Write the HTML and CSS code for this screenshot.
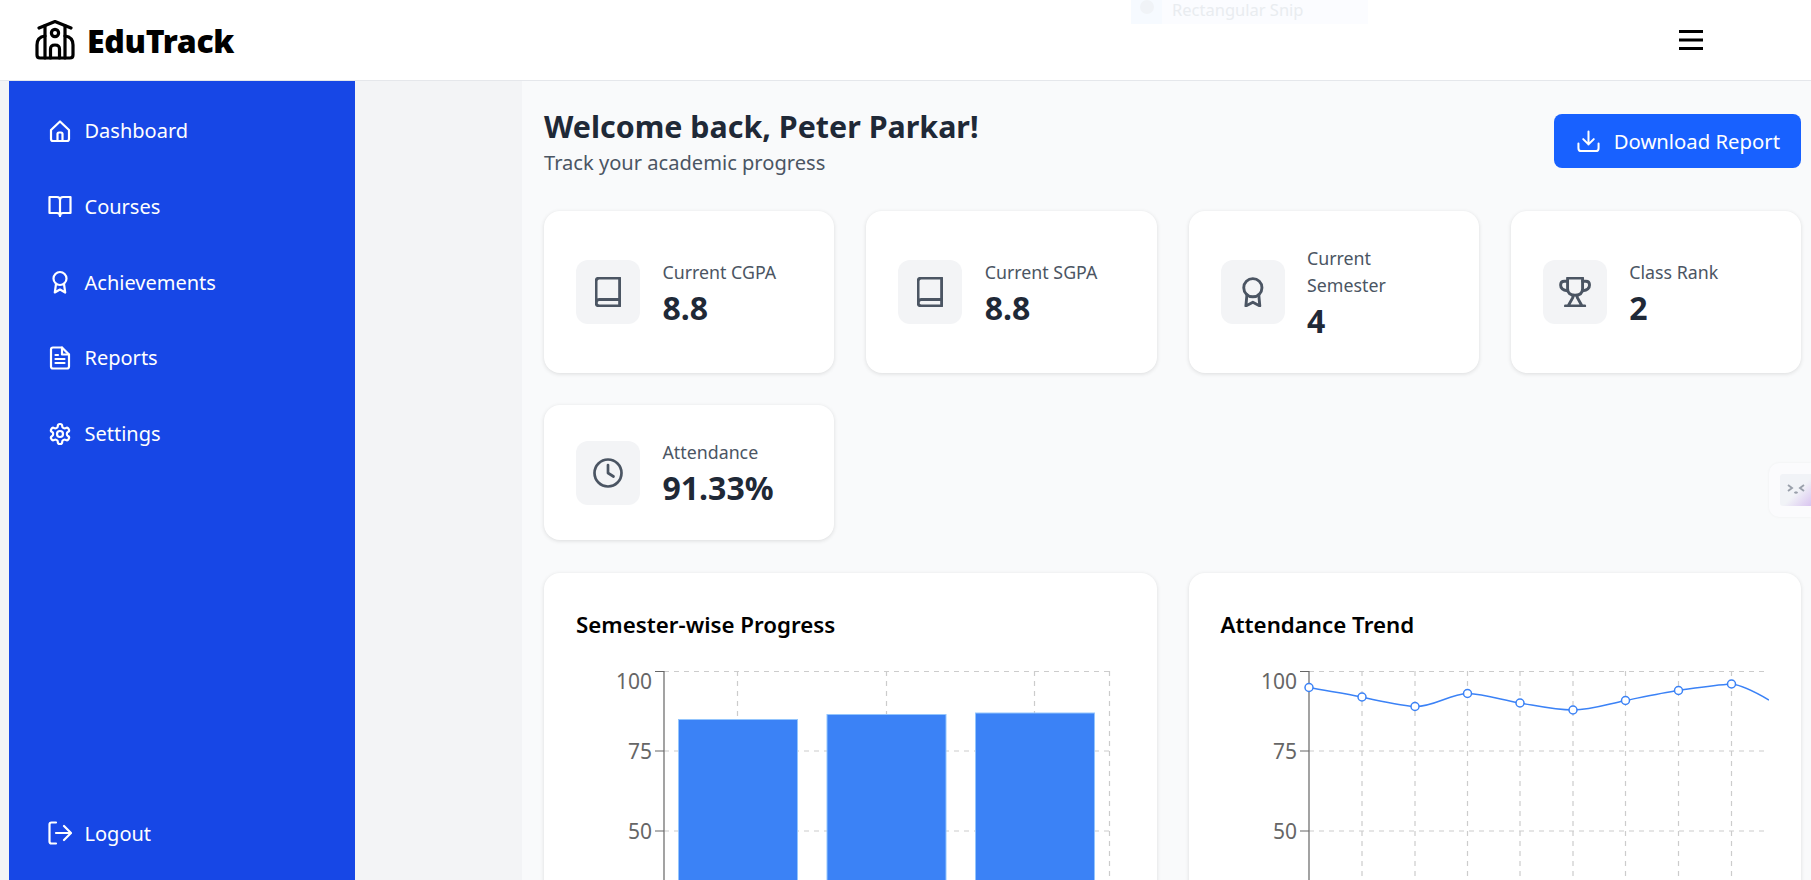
FILE: index.html
```html
<!DOCTYPE html>
<html lang="en">
<head>
<meta charset="UTF-8">
<meta name="viewport" content="width=device-width, initial-scale=1.0">
<title>EduTrack Dashboard</title>
<link rel="stylesheet" href="styles.css">
</head>
<body>

<header class="topbar">
    <div class="brand">
        <svg class="brand-icon" viewBox="0 0 40 40" fill="none" stroke="#000" stroke-width="3.2" stroke-linecap="round" stroke-linejoin="round">
            <path d="M4 8 L20 1.6 L36 8"/>
            <path d="M10 5.5 V38 M30 5.5 V38"/>
            <circle cx="20" cy="13" r="3.6"/>
            <path d="M10 16 Q2 17 2 25 V35 Q2 38 5 38 H35 Q38 38 38 35 V25 Q38 17 30 16"/>
            <path d="M15.5 38 V29 Q15.5 25 20 25 Q24.5 25 24.5 29 V38"/>
        </svg>
        <span class="brand-name">EduTrack</span>
    </div>
    <div class="snip-hint"><span class="snip-badge"><span class="snip-dot"></span></span>Rectangular Snip</div>
    <button class="menu-btn" aria-label="Menu">
        <svg viewBox="0 0 24 20" fill="none" stroke="#000" stroke-width="2.8">
            <path d="M0 1.5 H24 M0 10 H24 M0 18.5 H24"/>
        </svg>
    </button>
</header>

<div class="shell">
    <aside class="sidebar">
        <nav class="nav-main">
            <a class="nav-link" href="#">
                <svg viewBox="0 0 24 24"><path d="M3 11 L12 2.5 L21 11 V20 Q21 22 19 22 H5 Q3 22 3 20 Z"/><path d="M9.5 22 V15 Q9.5 13.5 11 13.5 H13 Q14.5 13.5 14.5 15 V22"/></svg>
                Dashboard
            </a>
            <a class="nav-link" href="#">
                <svg viewBox="0 0 24 24"><path d="M12 6 Q12 3 9 3 H1.5 V19 H9 Q12 19 12 22 Q12 19 15 19 H22.5 V3 H15 Q12 3 12 6 Z"/><path d="M12 6 V22"/></svg>
                Courses
            </a>
            <a class="nav-link" href="#">
                <svg viewBox="0 0 24 24"><circle cx="12" cy="8.5" r="6.5"/><path d="M8 14 L6.8 22.5 L12 19.5 L17.2 22.5 L16 14"/></svg>
                Achievements
            </a>
            <a class="nav-link" href="#">
                <svg viewBox="0 0 24 24"><path d="M14 1.5 H5 Q3 1.5 3 3.5 V20.5 Q3 22.5 5 22.5 H19 Q21 22.5 21 20.5 V8.5 Z"/><path d="M14 1.5 V8.5 H21"/><path d="M7.5 9 H10 M7.5 13 H16.5 M7.5 17 H16.5"/></svg>
                Reports
            </a>
            <a class="nav-link" href="#">
                <svg viewBox="0 0 24 24"><path d="M12.22 2h-.44a2 2 0 0 0-2 2v.18a2 2 0 0 1-1 1.73l-.43.25a2 2 0 0 1-2 0l-.15-.08a2 2 0 0 0-2.73.73l-.22.38a2 2 0 0 0 .73 2.73l.15.1a2 2 0 0 1 1 1.72v.51a2 2 0 0 1-1 1.74l-.15.09a2 2 0 0 0-.73 2.73l.22.38a2 2 0 0 0 2.73.73l.15-.08a2 2 0 0 1 2 0l.43.25a2 2 0 0 1 1 1.73V20a2 2 0 0 0 2 2h.44a2 2 0 0 0 2-2v-.18a2 2 0 0 1 1-1.73l.43-.25a2 2 0 0 1 2 0l.15.08a2 2 0 0 0 2.73-.73l.22-.39a2 2 0 0 0-.73-2.73l-.15-.08a2 2 0 0 1-1-1.74v-.5a2 2 0 0 1 1-1.74l.15-.09a2 2 0 0 0 .73-2.73l-.22-.38a2 2 0 0 0-2.73-.73l-.15.08a2 2 0 0 1-2 0l-.43-.25a2 2 0 0 1-1-1.73V4a2 2 0 0 0-2-2z"/><circle cx="12" cy="12" r="3"/></svg>
                Settings
            </a>
        </nav>
        <a class="nav-link" href="#">
            <svg viewBox="0 0 24 24"><path d="M8 1.5 H3.5 Q1.5 1.5 1.5 3.5 V20.5 Q1.5 22.5 3.5 22.5 H8"/><path d="M8 12 H23 M16 5 L23 12 L16 19"/></svg>
            Logout
        </a>
    </aside>

    <div class="gutter"></div>

    <main class="content">
        <div class="page-head">
            <div>
                <h1>Welcome back, Peter Parkar!</h1>
                <p>Track your academic progress</p>
            </div>
            <button class="download-btn">
                <svg viewBox="0 0 24 24"><path d="M12 1.5 V15 M6.5 9.5 L12 15 L17.5 9.5"/><path d="M1.5 14 V19 Q1.5 22 4.5 22 H19.5 Q22.5 22 22.5 19 V14"/></svg>
                Download Report
            </button>
        </div>

        <section class="stats">
            <div class="stat-card">
                <div class="stat-icon">
                    <svg viewBox="0 0 24 28"><path d="M1 24 V4 Q1 1 4 1 H23 V27 H4 Q1 27 1 24 Z"/><path d="M1 24 Q1 21 4 21 H23"/></svg>
                </div>
                <div class="stat-text"><div class="stat-label">Current CGPA</div><div class="stat-value">8.8</div></div>
            </div>
            <div class="stat-card">
                <div class="stat-icon">
                    <svg viewBox="0 0 24 28"><path d="M1 24 V4 Q1 1 4 1 H23 V27 H4 Q1 27 1 24 Z"/><path d="M1 24 Q1 21 4 21 H23"/></svg>
                </div>
                <div class="stat-text"><div class="stat-label">Current SGPA</div><div class="stat-value">8.8</div></div>
            </div>
            <div class="stat-card">
                <div class="stat-icon">
                    <svg viewBox="0 0 24 28"><circle cx="12" cy="10" r="8.5"/><path d="M6.5 16.5 L5.5 27 L12 23.5 L18.5 27 L17.5 16.5"/></svg>
                </div>
                <div class="stat-text"><div class="stat-label">Current Semester</div><div class="stat-value">4</div></div>
            </div>
            <div class="stat-card">
                <div class="stat-icon">
                    <svg viewBox="0 0 30 28"><path d="M8 1 H22 V11 Q22 17 15 17 Q8 17 8 11 Z"/><path d="M8 4 H5 Q1.5 4 1.5 7.5 Q1.5 12 8 13 M22 4 H25 Q28.5 4 28.5 7.5 Q28.5 12 22 13"/><path d="M13 17 V19 L8.5 27 M17 17 V19 L21.5 27 M6 27 H24"/></svg>
                </div>
                <div class="stat-text"><div class="stat-label">Class Rank</div><div class="stat-value">2</div></div>
            </div>
            <div class="stat-card">
                <div class="stat-icon">
                    <svg viewBox="0 0 30 30"><circle cx="15" cy="15" r="13.5"/><path d="M15 7 V15 L20.5 18.5"/></svg>
                </div>
                <div class="stat-text"><div class="stat-label">Attendance</div><div class="stat-value">91.33%</div></div>
            </div>
        </section>

        <section class="charts">
            <div class="chart-card">
                <h2>Semester-wise Progress</h2>
                <svg class="chart" viewBox="0 0 548 400">
                    <g class="grid">
                        <path d="M88 10.5 H533.5 M88 90 H533.5 M88 170 H533.5 M88 250 H533.5"/>
                        <path d="M161.5 10 V400 M310.5 10 V400 M458.5 10 V400 M533.5 10 V400"/>
                    </g>
                    <g class="bars">
                        <rect x="102.5" y="58.5" width="119" height="350"/>
                        <rect x="251" y="53.5" width="119" height="350"/>
                        <rect x="399.5" y="52" width="119" height="350"/>
                    </g>
                    <path class="axis" d="M79 10.5 H88 V400 M79 90 H88 M79 170 H88 M79 250 H88"/>
                    <text class="tick" x="76" y="28">100</text>
                    <text class="tick" x="76" y="98">75</text>
                    <text class="tick" x="76" y="178">50</text>
                </svg>
            </div>
            <div class="chart-card">
                <h2>Attendance Trend</h2>
                <svg class="chart" viewBox="0 0 548 400">
                    <g class="grid">
                        <path d="M88 10.5 H548 M88 90 H548 M88 170 H548 M88 250 H548"/>
                        <path d="M141 10 V400 M194 10 V400 M246.5 10 V400 M299 10 V400 M352 10 V400 M404.5 10 V400 M457.5 10 V400 M510.5 10 V400"/>
                    </g>
                    <path class="trend" d="M88 26.5 C106 30 123 32 141 36 C159 40 176 44 194 45.5 C212 46 229 33 246.5 32.5 C264 33 281 39 299 42 C317 45 334 49 352 49 C370 49 387 43 404.5 39.5 C422 36 440 32 457.5 29.5 C475 27 493 24 510.5 23 C522 24 536 32 548 39"/>
                    <path class="axis" d="M79 10.5 H88 V400 M79 90 H88 M79 170 H88 M79 250 H88"/>
                    <g class="points">
                        <circle cx="88" cy="26.5" r="4"/>
                        <circle cx="141" cy="36" r="4"/>
                        <circle cx="194" cy="45.5" r="4"/>
                        <circle cx="246.5" cy="32.5" r="4"/>
                        <circle cx="299" cy="42" r="4"/>
                        <circle cx="352" cy="49" r="4"/>
                        <circle cx="404.5" cy="39.5" r="4"/>
                        <circle cx="457.5" cy="29.5" r="4"/>
                        <circle cx="510.5" cy="23" r="4"/>
                    </g>
                    <text class="tick" x="76" y="28">100</text>
                    <text class="tick" x="76" y="98">75</text>
                    <text class="tick" x="76" y="178">50</text>
                </svg>
            </div>
        </section>
    </main>
</div>

<div class="side-widget">
    <div class="side-widget-face">
        <svg viewBox="0 0 20 12" fill="none" stroke="#9aa0ab" stroke-width="1.9">
            <path d="M2 2 L6 5 L2 8 M18 2 L14 5 L18 8 M8.5 9 Q10 10.5 11.5 9"/>
        </svg>
    </div>
</div>

</body>
</html>
```

FILE: styles.css
```css
* {
    box-sizing: border-box;
}

html, body {
    height: 100%;
}

body {
    margin: 0;
    overflow: hidden;
    background: #f3f4f6;
    color: #1f2937;
    font-family: "Noto Sans", "Open Sans", sans-serif;
}

.topbar {
    position: relative;
    height: 81px;
    display: flex;
    align-items: center;
    justify-content: space-between;
    padding: 0 108px 0 35px;
    background: #fff;
    border-bottom: 1px solid #e5e7eb;
}

.brand {
    display: flex;
    align-items: center;
    gap: 12px;
}

.brand-icon {
    width: 40px;
    height: 40px;
}

.brand-name {
    font-size: 32px;
    font-weight: 900;
    color: #000;
    letter-spacing: -0.3px;
}

.menu-btn {
    width: 24px;
    height: 20px;
    padding: 0;
    border: none;
    background: none;
}

.menu-btn svg {
    display: block;
    width: 24px;
    height: 20px;
}

.snip-hint {
    position: absolute;
    left: 1131px;
    top: 0;
    width: 237px;
    height: 24px;
    display: flex;
    align-items: flex-start;
    gap: 10px;
    background: #fbfcff;
    color: #e9ecf0;
    font-size: 16.5px;
    line-height: 20px;
}

.snip-badge {
    width: 31px;
    height: 24px;
    display: flex;
    justify-content: center;
    background: #f6faff;
}

.snip-dot {
    width: 14px;
    height: 14px;
    border-radius: 50%;
    background: #f0f3f7;
}

.shell {
    height: calc(100vh - 81px);
    display: flex;
    padding-left: 9px;
}

.sidebar {
    width: 346px;
    flex-shrink: 0;
    display: flex;
    flex-direction: column;
    justify-content: space-between;
    padding: 27px 0 24px 39px;
    background: #1747e6;
}

.nav-main {
    display: flex;
    flex-direction: column;
    gap: 30.2px;
}

.nav-link {
    display: flex;
    align-items: center;
    gap: 12.5px;
    height: 45.5px;
    color: #fff;
    font-size: 20px;
    text-decoration: none;
}

.nav-link svg {
    width: 24px;
    height: 24px;
    fill: none;
    stroke: #fff;
    stroke-width: 2.2;
    stroke-linecap: round;
    stroke-linejoin: round;
}

.gutter {
    width: 167px;
    flex-shrink: 0;
}

.content {
    flex: 1;
    min-width: 0;
    padding: 26px 10px 0 22px;
    background: #f9fafb;
}

.page-head {
    display: flex;
    justify-content: space-between;
    align-items: flex-start;
    margin-bottom: 34px;
}

.page-head h1 {
    margin: 0;
    font-size: 30.4px;
    line-height: 40px;
    font-weight: 700;
    color: #1f2937;
}

.page-head p {
    margin: 2px 0 0;
    font-size: 20.1px;
    line-height: 28px;
    color: #4b5563;
}

.download-btn {
    display: flex;
    align-items: center;
    gap: 14px;
    height: 54px;
    margin-top: 7px;
    padding: 0 21px 0 23px;
    border: none;
    border-radius: 8px;
    background: #1861ff;
    color: #fff;
    font-family: inherit;
    font-size: 20.3px;
}

.download-btn svg {
    width: 23px;
    height: 23px;
    fill: none;
    stroke: #fff;
    stroke-width: 2.1;
    stroke-linecap: round;
    stroke-linejoin: round;
}

.stats {
    display: grid;
    grid-template-columns: repeat(4, 1fr);
    gap: 32px;
    margin-bottom: 33px;
}

.stat-card {
    display: flex;
    align-items: center;
    gap: 22.5px;
    padding: 32px;
    background: #fff;
    border-radius: 16px;
    box-shadow: 0 1px 4px rgba(0, 0, 0, 0.12);
}

.stat-icon {
    width: 64px;
    height: 64px;
    flex-shrink: 0;
    display: flex;
    align-items: center;
    justify-content: center;
    background: #f3f4f6;
    border-radius: 12px;
}

.stat-icon svg {
    height: 30px;
    fill: none;
    stroke: #4b5563;
    stroke-width: 2.7;
    stroke-linecap: round;
    stroke-linejoin: round;
}

.stat-text {
    padding-top: 2px;
    margin-bottom: -2px;
}

.stat-label {
    font-size: 17.8px;
    line-height: 27px;
    color: #4b5563;
}

.stat-value {
    font-size: 32px;
    line-height: 44px;
    font-weight: 700;
    color: #1f2937;
}

.charts {
    display: grid;
    grid-template-columns: repeat(2, 1fr);
    gap: 32px;
}

.chart-card {
    height: 640px;
    padding: 33px 32px 32px;
    background: #fff;
    border-radius: 16px;
    box-shadow: 0 1px 4px rgba(0, 0, 0, 0.12);
}

.chart-card h2 {
    margin: 0 0 15px;
    font-size: 22.3px;
    line-height: 38px;
    padding-bottom: 2px;
    font-weight: 600;
    color: #000;
}

.chart {
    display: block;
    width: 548px;
    height: 400px;
    overflow: hidden;
}

.grid path {
    fill: none;
    stroke: #ccc;
    stroke-width: 1.2;
    stroke-dasharray: 5 5;
}

.bars rect {
    fill: #3b82f6;
    stroke: #93c5fd;
    stroke-width: 1;
}

.axis {
    fill: none;
    stroke: #666;
    stroke-width: 1.2;
}

.tick {
    fill: #666;
    font-size: 21px;
    text-anchor: end;
}

.trend {
    fill: none;
    stroke: #3b82f6;
    stroke-width: 1.5;
}

.points circle {
    fill: #fff;
    stroke: #3b82f6;
    stroke-width: 1.5;
}

.side-widget {
    position: absolute;
    right: 0;
    top: 463px;
    width: 42px;
    height: 54px;
    padding: 11px 0 0 11px;
    background: #fbfbfd;
    border-radius: 10px 0 0 10px;
    box-shadow: 0 0 3px rgba(0, 0, 0, 0.05);
}

.side-widget-face {
    height: 32px;
    padding: 9px 4px 0 6px;
    background: linear-gradient(135deg, #f1f3f7 55%, #d9c4f0);
    border-radius: 3px 0 0 3px;
}

.side-widget-face svg {
    display: block;
    width: 20px;
    height: 12px;
}
```
